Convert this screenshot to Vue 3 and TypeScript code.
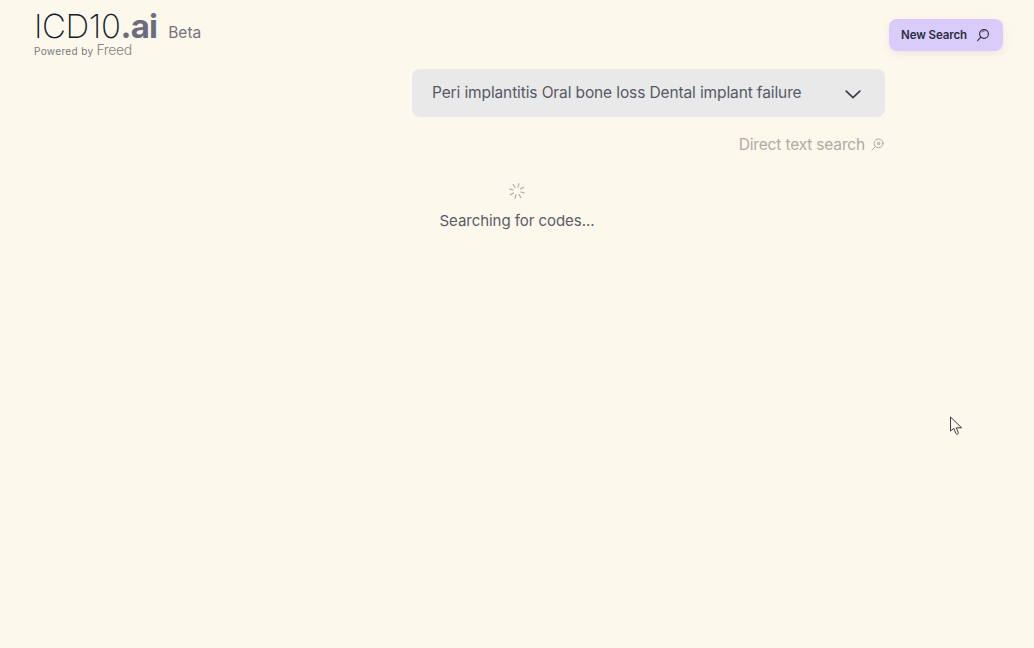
<script setup lang="ts">
const query: string = "Peri implantitis Oral bone loss Dental implant failure";
const rays = [0, 45, 90, 135, 180, 225, 270, 315];
</script>

<template>
  <div class="page">
    <header class="header">
      <div class="brand">
        <div class="logo-col">
          <div class="logo"><span class="logo-main">ICD10</span><span class="logo-ai">.ai</span></div>
          <div class="powered"><span>Powered by</span><span class="freed">Freed</span></div>
        </div>
        <span class="beta">Beta</span>
      </div>
      <button class="new-search">
        <span>New Search</span>
        <svg width="14" height="14" viewBox="0 0 14 14" fill="none" stroke="#2b2b3d" stroke-width="1.1" stroke-linecap="round">
          <circle cx="8" cy="6" r="4.4" />
          <path d="M4.8 9.2 L1.6 12.6" />
          <path d="M6 3.9 A3 3 0 0 1 8.2 3.2" stroke-width="0.7" />
        </svg>
      </button>
    </header>
    <main class="main">
      <div class="column">
        <div class="select">
          <span class="select-text">{{ query }}</span>
          <svg class="chevron" width="16" height="9" viewBox="0 0 16 9" fill="none" stroke="#3d3d4a" stroke-width="1.7" stroke-linecap="round" stroke-linejoin="round">
            <path d="M1.2 1.2 L8 7.6 L14.8 1.2" />
          </svg>
        </div>
        <div class="direct">
          <span>Direct text search</span>
          <svg width="13" height="13" viewBox="0 0 13 13" fill="none" stroke="#a9a9a3" stroke-width="1" stroke-linecap="round">
            <circle cx="7.6" cy="5.4" r="4.4" />
            <circle cx="7.6" cy="5.4" r="1.8" fill="#c4c4bd" stroke="none" />
            <path d="M4.4 8.6 L1 12" />
          </svg>
        </div>
        <div class="loading">
          <svg class="spinner" width="18" height="18" viewBox="0 0 18 18" stroke="#a8a8a4" stroke-width="1.1" stroke-linecap="round">
            <line v-for="r in rays" :key="r" x1="9" y1="1.4" x2="9" y2="5" :transform="`rotate(${r + 15} 9 9)`" />
          </svg>
          <span class="loading-text">Searching for codes...</span>
        </div>
      </div>
    </main>
    <svg class="cursor" width="14" height="20" viewBox="0 0 14 20" fill="#fdf8ec" stroke="#3a3a48" stroke-width="1" stroke-linejoin="round">
      <path d="M1.5 1 L1.5 15 L4.8 12.4 L7 17.6 C7.6 18.8 9.8 18 9.3 16.6 L7.3 11.8 L12.6 11.8 Z" />
    </svg>
  </div>
</template>

<style>
html, body { margin: 0; background: #fdf8ec; }
</style>

<style scoped>
.page {
  position: relative;
  width: 1034px;
  height: 648px;
  overflow: hidden;
  background: #fdf8ec;
  font-family: Inter, "Liberation Sans", sans-serif;
  color: #4e5160;
}
.header {
  display: flex;
  justify-content: space-between;
  align-items: flex-start;
  padding: 11px 31px 0 34px;
  height: 57px;
  box-sizing: border-box;
}
.brand { display: flex; align-items: flex-start; gap: 11px; }
.logo-col { display: flex; flex-direction: column; }
.logo { display: flex; align-items: baseline; height: 30px; line-height: 30px; }
.logo-main {
  font-size: 33px;
  font-weight: 250;
  color: #111b2b;
  letter-spacing: -0.4px;
}
.logo-ai {
  font-size: 33px;
  font-weight: 700;
  color: #6b6d7c;
  letter-spacing: -0.8px;
}
.powered {
  display: flex;
  align-items: baseline;
  gap: 3px;
  font-size: 10px;
  line-height: 13px;
  margin-top: 2px;
  color: #77787f;
  letter-spacing: 0.35px;
}
.freed { font-size: 14px; line-height: 13px; font-weight: 300; letter-spacing: -0.35px; color: #85857f; }
.beta { font-size: 15.5px; color: #72737f; line-height: 20px; margin-top: 12px; }
.new-search {
  display: flex;
  align-items: center;
  gap: 9px;
  height: 32px;
  margin-top: 8px;
  padding: 0 13px 0 12px;
  border: 0;
  border-radius: 8px;
  background: #d9ccfa;
  box-shadow: 0 3px 8px rgba(120, 110, 160, 0.12);
  color: #2b2d42;
  font: 600 11.5px Inter, "Liberation Sans", sans-serif;
  letter-spacing: -0.1px;
}
.main { padding-left: 412px; padding-top: 12px; }
.column { width: 473px; display: flex; flex-direction: column; }
.select {
  display: flex;
  justify-content: space-between;
  align-items: center;
  height: 48px;
  padding: 0 24px 0 20px;
  box-sizing: border-box;
  border-radius: 8px;
  background: #e9e9e9;
}
.select-text { font-size: 15.5px; color: #555967; letter-spacing: -0.12px; margin-bottom: 2px; }
.chevron { margin-top: 2px; }
.direct {
  display: flex;
  justify-content: flex-end;
  align-items: center;
  gap: 6px;
  margin-top: 17px;
  padding-right: 1px;
  height: 20px;
  font-size: 15.5px;
  color: #acaca7;
  letter-spacing: -0.17px;
}
.loading {
  width: 210px;
  margin-top: 28px;
  display: flex;
  flex-direction: column;
  align-items: center;
  gap: 11px;
}
.spinner { display: block; }
.loading-text { font-size: 15px; line-height: 20px; color: #5a5c69; letter-spacing: -0.05px; }
.cursor { position: absolute; left: 949px; top: 416px; }
</style>
